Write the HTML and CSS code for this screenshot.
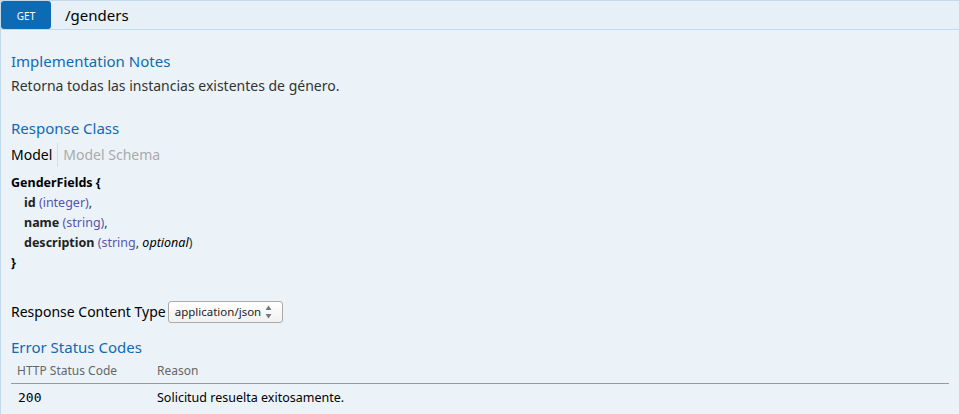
FILE: index.html
```html
<!DOCTYPE html>
<html>
<head>
<meta charset="utf-8">
<link rel="stylesheet" href="styles.css">
</head>
<body>
<div class="operation">
  <div class="heading">
    <span class="method">GET</span>
    <span class="path">/genders</span>
  </div>
  <div class="content">
    <h4>Implementation Notes</h4>
    <p class="notes">Retorna todas las instancias existentes de género.</p>
    <h4>Response Class</h4>
    <div class="tabs">
      <span class="tab active">Model</span>
      <span class="tab">Model Schema</span>
    </div>
    <div class="model">
      <div class="model-name">GenderFields {</div>
      <div class="prop"><b>id</b> <span class="type">(integer)</span>,</div>
      <div class="prop"><b>name</b> <span class="type">(string)</span>,</div>
      <div class="prop"><b>description</b> <span class="type">(string</span>, <i class="opt">optional</i>)</div>
      <div class="model-name">}</div>
    </div>
    <div class="ctype">
      <span class="ctype-label">Response Content Type</span>
      <span class="select">application/json
        <svg class="arrows" width="7" height="14" viewBox="0 0 7 14"><path d="M3.5 0.5 L6.5 5 H0.5 Z M3.5 13.5 L6.5 9 H0.5 Z" fill="#777"/></svg>
      </span>
    </div>
    <h4 class="err">Error Status Codes</h4>
    <table class="codes">
      <colgroup><col class="c1"><col></colgroup>
      <thead>
        <tr><th>HTTP Status Code</th><th>Reason</th></tr>
      </thead>
      <tbody>
        <tr><td class="code">200</td><td>Solicitud resuelta exitosamente.</td></tr>
      </tbody>
    </table>
  </div>
</div>
</body>
</html>
```
FILE: styles.css
```css
html, body {
  margin: 0;
  padding: 0;
  background: #fff;
}
body {
  font-family: "Noto Sans", "Open Sans", sans-serif;
  font-size: 14px;
  color: #000;
}
.operation {
  width: 960px;
}
.heading {
  height: 28px;
  background: #e7f0f7;
  border: 1px solid #c3d9ec;
  display: flex;
  align-items: center;
}
.method {
  width: 50px;
  height: 28px;
  box-sizing: border-box;
  background: #0f6ab4;
  color: #fff;
  font-size: 10px;
  display: flex;
  align-items: center;
  justify-content: center;
  border-radius: 3px;
  padding-top: 2px;
}
.path {
  padding-left: 14px;
  font-size: 15px;
  line-height: 20px;
  color: #000;
}
.content {
  background: #ebf3f9;
  border: 1px solid #c3d9ec;
  border-top: none;
  padding: 6px 10px 40px;
}
h4 {
  margin: 0;
  padding: 15px 0 5px;
  color: #0f6ab4;
  font-size: 15px;
  font-weight: normal;
  line-height: 20px;
}
.notes {
  margin: 0;
  padding: 0 0 8px;
  color: #333;
  line-height: 19px;
}
.tabs {
  display: flex;
  line-height: 24px;
}
.tab {
  color: #aaa;
  padding-right: 5px;
}
.tab.active {
  color: #000;
  border-right: 1px solid #d6dde3;
  margin-right: 5px;
}
.model {
  padding-top: 6px;
  font-size: 12.5px;
  line-height: 20px;
  color: #333;
}
.model-name {
  font-weight: bold;
  color: #000;
}
.prop {
  margin-left: 13px;
}
.prop b {
  color: #222;
}
.type {
  color: #55a;
}
.opt {
  color: #000;
}
.ctype {
  display: flex;
  align-items: center;
  margin-top: 28px;
  height: 22px;
}
.ctype-label {
  margin-right: 2px;
  line-height: 22px;
}
.select {
  position: relative;
  width: 115px;
  height: 22px;
  box-sizing: border-box;
  border: 1px solid #aaa;
  border-radius: 3px;
  background: linear-gradient(#fff, #f1f1f1);
  font-size: 11.5px;
  line-height: 20px;
  padding-left: 6px;
  color: #222;
}
.arrows {
  position: absolute;
  right: 10px;
  top: 3px;
}
h4.err {
  padding-top: 14px;
}
.codes {
  width: 100%;
  border-collapse: collapse;
  table-layout: fixed;
  font-size: 12.5px;
}
.codes col.c1 {
  width: 140px;
}
.codes th {
  text-align: left;
  font-weight: normal;
  font-size: 12px;
  color: #666;
  line-height: 16px;
  padding: 1px 0 4px 6px;
  border-bottom: 1px solid #999;
}
.codes td {
  line-height: 16px;
  padding: 6px 0 5px 6px;
  vertical-align: baseline;
}
.codes td.code {
  font-family: "DejaVu Sans Mono", "Liberation Mono", monospace;
  font-size: 13px;
  padding-left: 7px;
}
```
